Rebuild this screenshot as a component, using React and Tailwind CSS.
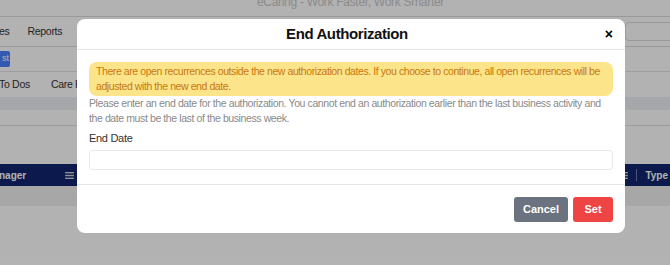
import React from "react";

function MenuIcon({ className }) {
  return (
    <svg viewBox="0 0 10 8" className={className} fill="currentColor">
      <rect x="0" y="0" width="10" height="1.6" />
      <rect x="0" y="3.2" width="10" height="1.6" />
      <rect x="0" y="6.4" width="10" height="1.6" />
    </svg>
  );
}

function Page() {
  return (
    <div className="flex flex-col w-full h-full bg-white text-[#333]">
      <div className="h-[17px] border-b border-[#dcdcdc] flex justify-center overflow-hidden">
        <div className="text-[12px] leading-[12px] text-[#c8c8c8] -mt-[4px] ml-[31px] tracking-[-0.3px]">eCaring - Work Faster, Work Smarter</div>
      </div>
      <div className="h-[30px] border-b border-[#dcdcdc] flex items-center text-[10.5px] tracking-[-0.3px] justify-between">
        <div className="flex gap-[18px] -ml-[1px]">
          <span>es</span>
          <span>Reports</span>
        </div>
        <div className="w-[60px] h-[19px] mr-[-15px] border border-[#dcdcdc] rounded-[4px] mb-[1px]" />
      </div>
      <div className="h-[25px] border-b border-[#e3e3e3] flex items-center">
        <div className="h-[16px] w-[10px] bg-[#4a80ff] rounded-r-[2px] text-white text-[9px] flex items-center justify-end pr-[1px]">st</div>
      </div>
      <div className="h-[25px] flex items-center text-[10.5px] tracking-[-0.3px] gap-[21px]">
        <span className="-ml-[1px]">To Dos</span>
        <span>Care Plans</span>
      </div>
      <div className="h-[13px] bg-[#ecf0f4]" />
      <div className="h-[16px] border-b border-[#e3e3e3]" />
      <div className="h-[38px]" />
      <div className="h-[22px] bg-[#10246e] text-white flex items-center justify-between text-[10px] font-bold">
        <div className="flex items-center w-[77px] justify-between pr-[3px]">
          <span className="-ml-[1px]">nager</span>
          <MenuIcon className="w-[9px] h-[7px] text-[#d0d0d0]" />
        </div>
        <div className="flex items-center">
          <MenuIcon className="w-[9px] h-[7px] text-[#d0d0d0]" />
          <div className="w-px h-[12px] bg-[#6a7ab0] mx-[8px]" />
          <span className="mr-[2px]">Type</span>
        </div>
      </div>
      <div className="h-[20px] bg-[#f0f0f0]" />
    </div>
  );
}

export default function App() {
  return (
    <div className="relative w-[670px] h-[265px] overflow-hidden" style={{ fontFamily: '"Liberation Sans", Arial, sans-serif' }}>
      <Page />
      <div className="absolute inset-0 bg-black/30 pt-[19px] pl-[77px]">
        <div className="w-[548px] h-[214px] bg-white rounded-[8px] flex flex-col">
          <div className="h-[31px] border-b border-[#e5e5e5] flex items-center relative">
            <div className="flex-1 text-center text-[15px] font-bold text-[#111] tracking-[-0.4px] -ml-[8px] pt-[1px]">End Authorization</div>
            <span className="absolute right-[12px] top-[8px] text-[14px] font-bold leading-[14px] text-black">×</span>
          </div>
          <div className="px-[12px] pt-[12px] flex flex-col">
            <div className="bg-[#fce48a] text-[#c9780e] rounded-[8px] px-[7px] py-[2px] text-[10.5px] leading-[15px] tracking-[-0.42px]">
              There are open recurrences outside the new authorization dates. If you choose to continue, all open recurrences will be adjusted with the new end date.
            </div>
            <div className="text-[10.5px] leading-[14.5px] text-[#8a8a8a] tracking-[-0.4px] pr-[4px]">
              Please enter an end date for the authorization. You cannot end an authorization earlier than the last business activity and the date must be the last of the business week.
            </div>
            <div className="text-[11px] text-[#333] mt-[6px] leading-[14px] tracking-[-0.3px]">End Date</div>
            <div className="h-[20px] mt-[5px] border border-[#e8e8e8] rounded-[4px]" />
          </div>
          <div className="mt-[14px] border-t border-[#e5e5e5] flex justify-end gap-[5px] px-[12px] pt-[12px]">
            <button className="w-[54px] h-[25px] bg-[#6b7280] text-white text-[11px] font-bold rounded-[3px]">Cancel</button>
            <button className="w-[40px] h-[25px] bg-[#ef4444] text-white text-[11px] font-bold rounded-[3px]">Set</button>
          </div>
        </div>
      </div>
    </div>
  );
}
